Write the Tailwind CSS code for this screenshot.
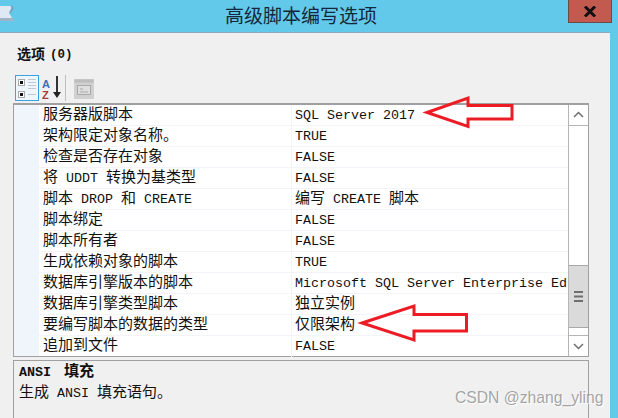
<!DOCTYPE html>
<html lang="zh-CN">
<head>
    <meta charset="UTF-8">
    <title>高级脚本编写选项</title>
    <script src="https://cdn.jsdelivr.net/npm/@tailwindcss/browser@4"></script>
</head>
<body class="relative w-[618px] h-[418px] overflow-hidden bg-[#63c9ea] font-['Liberation_Mono','Noto_Sans_CJK_SC',monospace] text-[#111]">

    <!-- Title bar -->
    <header class="relative h-[32px] pr-[16px] flex justify-center">
        <svg class="absolute left-0 top-[4px]" width="15" height="20" viewBox="0 0 15 20">
            <path d="M0 2H12L9 9L14 17H0Z" fill="#dfe9f3"/>
            <path d="M0 14H13L14 17H0Z" fill="#9fb4c6"/>
            <path d="M11 2L13 4L10 9" fill="none" stroke="#7f9db5" stroke-width="1.5"/>
        </svg>
        <h1 class="text-[19px] leading-[30px] text-[#14283c] font-['Noto_Sans_CJK_SC',sans-serif]">高级脚本编写选项</h1>
        <div class="absolute left-[568px] top-0 w-[44px] h-[23px] bg-[#c25a50] border border-[#6d4a48] border-t-0 flex items-center justify-center">
            <svg width="14" height="11" viewBox="0 0 14 11"><path d="M2 0.5L12 10.5M12 0.5L2 10.5" stroke="#111" stroke-width="3"/></svg>
        </div>
    </header>

    <!-- Dialog body -->
    <main class="w-[610px] h-[386px] bg-[#f0f0f0] border-t border-[#8fa9b8] pl-[13px] pr-[21px] flex flex-col">
        <div class="h-[42px] pl-[4px] pt-[12px] text-[14px] leading-[20px] font-bold flex">选项<span class="ml-[5px] text-[12.5px]">(0)</span></div>

        <!-- Toolbar -->
        <div class="h-[28px] pl-[2px] flex items-start gap-[2px]">
            <div class="w-[24px] h-[26px] border border-[#3ba3e0] bg-[#eef6fc]">
                <svg width="22" height="24" viewBox="0 0 22 24">
                    <rect x="2.5" y="3.5" width="6" height="6" fill="#fff" stroke="#a8a8a8"/><rect x="4" y="5" width="3" height="3" fill="#111"/>
                    <rect x="2.5" y="15.5" width="6" height="6" fill="#fff" stroke="#a8a8a8"/><rect x="4" y="17" width="3" height="3" fill="#111"/>
                    <path d="M12 3.5H20M12 6.5H20M12 9.5H20M12 12.5H20M12 18.5H20" stroke="#c2c8ce"/>
                </svg>
            </div>
            <div class="w-[22px] h-[26px] relative font-['Liberation_Sans',sans-serif] font-bold text-[11px] leading-[10px]">
                <span class="absolute left-[1px] top-[4px] text-[#3f6fb5]">A</span>
                <span class="absolute left-[1px] top-[15px] text-[#a83a3a]">Z</span>
                <svg class="absolute left-[11px] top-0" width="10" height="26" viewBox="0 0 10 26"><path d="M5 1V18" stroke="#333" stroke-width="2"/><path d="M1 17H9L5 23Z" fill="#222"/></svg>
            </div>
            <div class="w-px h-[26px] bg-[#bdbdbd]"></div>
            <svg class="ml-[6px] mt-[4px]" width="20" height="20" viewBox="0 0 20 20">
                <rect x="0" y="0" width="20" height="20" fill="#d0d0d0"/>
                <rect x="0.5" y="0.5" width="19" height="3" fill="#bcbcbc"/>
                <rect x="3.5" y="6.5" width="13" height="9" fill="#dedede" stroke="#a9a9a9"/>
                <path d="M6 10H9M6 13H14" stroke="#a9a9a9"/>
            </svg>
        </div>

        <!-- Property grid -->
        <section class="h-[254px] border border-[#a0a0a0] border-t-2 flex bg-white">
            <div class="w-[25px] bg-[#f0f5fc]"></div>
            <div class="w-[529px] text-[15px] divide-y divide-[#f3f3fa]">
                <div class="h-[21px] flex leading-[22px]"><span class="w-[252px] pl-[4px]">服务器版脚本</span><span class="border-l border-[#f3f3fa] pl-[3px] text-[13.33px]">SQL Server 2017</span></div>
                <div class="h-[21px] flex leading-[22px]"><span class="w-[252px] pl-[4px]">架构限定对象名称。</span><span class="border-l border-[#f3f3fa] pl-[3px] text-[13.33px]">TRUE</span></div>
                <div class="h-[21px] flex leading-[22px]"><span class="w-[252px] pl-[4px]">检查是否存在对象</span><span class="border-l border-[#f3f3fa] pl-[3px] text-[13.33px]">FALSE</span></div>
                <div class="h-[21px] flex leading-[22px]"><span class="w-[252px] pl-[4px] [word-spacing:-1px]">将 <span class="text-[13.33px]">UDDT</span> 转换为基类型</span><span class="border-l border-[#f3f3fa] pl-[3px] text-[13.33px]">FALSE</span></div>
                <div class="h-[21px] flex leading-[22px]"><span class="w-[252px] pl-[4px] [word-spacing:-1px]">脚本 <span class="text-[13.33px]">DROP</span> 和 <span class="text-[13.33px]">CREATE</span></span><span class="border-l border-[#f3f3fa] pl-[3px] [word-spacing:-1px]">编写 <span class="text-[13.33px]">CREATE</span> 脚本</span></div>
                <div class="h-[21px] flex leading-[22px]"><span class="w-[252px] pl-[4px]">脚本绑定</span><span class="border-l border-[#f3f3fa] pl-[3px] text-[13.33px]">FALSE</span></div>
                <div class="h-[21px] flex leading-[22px]"><span class="w-[252px] pl-[4px]">脚本所有者</span><span class="border-l border-[#f3f3fa] pl-[3px] text-[13.33px]">FALSE</span></div>
                <div class="h-[21px] flex leading-[22px]"><span class="w-[252px] pl-[4px]">生成依赖对象的脚本</span><span class="border-l border-[#f3f3fa] pl-[3px] text-[13.33px]">TRUE</span></div>
                <div class="h-[21px] flex leading-[22px]"><span class="w-[252px] pl-[4px]">数据库引擎版本的脚本</span><span class="border-l border-[#f3f3fa] pl-[3px] text-[13.33px] whitespace-nowrap">Microsoft SQL Server Enterprise Ed</span></div>
                <div class="h-[21px] flex leading-[22px]"><span class="w-[252px] pl-[4px]">数据库引擎类型脚本</span><span class="border-l border-[#f3f3fa] pl-[3px]">独立实例</span></div>
                <div class="h-[21px] flex leading-[22px]"><span class="w-[252px] pl-[4px]">要编写脚本的数据的类型</span><span class="border-l border-[#f3f3fa] pl-[3px]">仅限架构</span></div>
                <div class="h-[21px] flex leading-[22px]"><span class="w-[252px] pl-[4px]">追加到文件</span><span class="border-l border-[#f3f3fa] pl-[3px] text-[13.33px]">FALSE</span></div>
            </div>

            <!-- Scrollbar -->
            <div class="w-[20px] border-l border-[#b5b5b5] flex flex-col bg-white">
                <div class="h-[21px] border-b border-[#b5b5b5] flex items-center justify-center">
                    <svg width="11" height="7" viewBox="0 0 11 7"><path d="M1 6L5.5 1.5L10 6" fill="none" stroke="#6e6e6e" stroke-width="1.5"/></svg>
                </div>
                <div class="h-[140px]"></div>
                <div class="h-[63px] bg-[#dadada] border-y border-[#a8a8a8] flex items-center justify-center">
                    <svg width="9" height="11" viewBox="0 0 9 11"><path d="M0 1H9M0 5.5H9M0 10H9" stroke="#6e6e6e" stroke-width="2"/></svg>
                </div>
                <div class="h-[7px]"></div>
                <div class="h-[21px] border-t border-[#b5b5b5] flex items-center justify-center">
                    <svg width="11" height="7" viewBox="0 0 11 7"><path d="M1 1L5.5 5.5L10 1" fill="none" stroke="#6e6e6e" stroke-width="1.5"/></svg>
                </div>
            </div>
        </section>

        <!-- Description -->
        <section class="mt-[3px] flex-1 border border-b-0 border-[#a0a0a0] pl-[5px] pt-[1px] text-[15px] leading-[21px]">
            <div class="font-bold"><span class="text-[13.33px] mr-[4px]">ANSI</span> 填充</div>
            <div class="[word-spacing:-1px]">生成 <span class="text-[13.33px]">ANSI</span> 填充语句。</div>
        </section>
    </main>

    <!-- Red annotation arrows -->
    <svg class="absolute left-0 top-0 pointer-events-none" width="618" height="418" viewBox="0 0 618 418">
        <path d="M427 112.5L468 98V105.5H512V119H468V126.5Z" fill="none" stroke="#ed1c24" stroke-width="3"/>
        <path d="M362 323L414 306V314.5H466.5V331H414V340Z" fill="none" stroke="#ed1c24" stroke-width="3"/>
    </svg>

    <!-- Watermark -->
    <div class="absolute left-[455px] top-[388px] text-[15.7px] leading-[20px] whitespace-nowrap font-['Liberation_Sans',sans-serif] text-[#9a9a9a]/90 [text-shadow:1px_1px_1px_#fff]">CSDN @zhang_yling</div>
</body>
</html>
